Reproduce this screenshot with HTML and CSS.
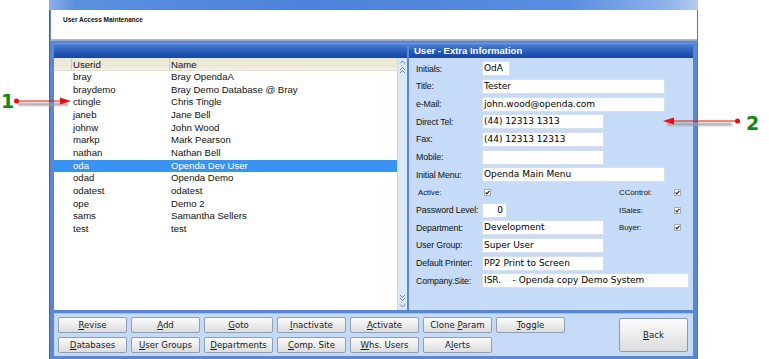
FILE: index.html
```html
<!DOCTYPE html>
<html>
<head>
<meta charset="utf-8">
<title>User Access Maintenance</title>
<link rel="stylesheet" href="styles.css">
</head>
<body>
<div class="window">
  <div class="titlebar"></div>
  <div class="header">User Access Maintenance</div>
  <div class="main">
    <section class="listpanel">
      <div class="phead"></div>
      <div class="listbody">
        <div class="list">
          <div class="lhead"><span class="c0"></span><span class="c1">Userid</span><span class="c2">Name</span></div>
          <div class="row"><span class="c0"></span><span class="c1">bray</span><span class="c2">Bray OpendaA</span></div>
          <div class="row"><span class="c0"></span><span class="c1">braydemo</span><span class="c2">Bray Demo Database @ Bray</span></div>
          <div class="row"><span class="c0"></span><span class="c1">ctingle</span><span class="c2">Chris Tingle</span></div>
          <div class="row"><span class="c0"></span><span class="c1">janeb</span><span class="c2">Jane Bell</span></div>
          <div class="row"><span class="c0"></span><span class="c1">johnw</span><span class="c2">John Wood</span></div>
          <div class="row"><span class="c0"></span><span class="c1">markp</span><span class="c2">Mark Pearson</span></div>
          <div class="row"><span class="c0"></span><span class="c1">nathan</span><span class="c2">Nathan Bell</span></div>
          <div class="row sel"><span class="c0"></span><span class="c1">oda</span><span class="c2">Openda Dev User</span></div>
          <div class="row"><span class="c0"></span><span class="c1">odad</span><span class="c2">Openda Demo</span></div>
          <div class="row"><span class="c0"></span><span class="c1">odatest</span><span class="c2">odatest</span></div>
          <div class="row"><span class="c0"></span><span class="c1">ope</span><span class="c2">Demo 2</span></div>
          <div class="row"><span class="c0"></span><span class="c1">sams</span><span class="c2">Samantha Sellers</span></div>
          <div class="row"><span class="c0"></span><span class="c1">test</span><span class="c2">test</span></div>
        </div>
        <div class="scroll">
          <div class="sbtop">
            <svg width="7" height="6" viewBox="0 0 7 6"><path d="M1 4.5L3.5 2L6 4.5" fill="none" stroke="#6a7f9c" stroke-width="1"/></svg>
            <svg width="7" height="8" viewBox="0 0 7 8"><path d="M1 4L3.5 1.5L6 4M1 7L3.5 4.5L6 7" fill="none" stroke="#6a7f9c" stroke-width="1"/></svg>
          </div>
          <div class="sbbot">
            <svg width="7" height="8" viewBox="0 0 7 8"><path d="M1 1L3.5 3.5L6 1M1 4L3.5 6.5L6 4" fill="none" stroke="#6a7f9c" stroke-width="1"/></svg>
            <svg width="7" height="6" viewBox="0 0 7 6"><path d="M1 1.5L3.5 4L6 1.5" fill="none" stroke="#6a7f9c" stroke-width="1"/></svg>
          </div>
        </div>
      </div>
    </section>
    <section class="infopanel">
      <div class="phead">User - Extra Information</div>
      <div class="form">
        <div class="frow"><span class="lbl">Initials:</span><span class="fld w-xs">OdA</span></div>
        <div class="frow"><span class="lbl">Title:</span><span class="fld w-l">Tester</span></div>
        <div class="frow"><span class="lbl">e-Mail:</span><span class="fld w-l">john.wood@openda.com</span></div>
        <div class="frow"><span class="lbl">Direct Tel:</span><span class="fld w-m">(44) 12313 1313</span></div>
        <div class="frow"><span class="lbl">Fax:</span><span class="fld w-m">(44) 12313 12313</span></div>
        <div class="frow"><span class="lbl">Mobile:</span><span class="fld w-m"></span></div>
        <div class="frow"><span class="lbl">Initial Menu:</span><span class="fld w-l">Openda Main Menu</span></div>
        <div class="frow"><span class="lbl small">Active:</span><span class="chkcell"><span class="chk"><svg width="5" height="5" viewBox="0 0 5 5"><path d="M0.6 2.4L1.9 3.9L4.4 0.8" fill="none" stroke="#222" stroke-width="1.1"/></svg></span></span><span class="lbl small">CControl:</span><span class="chk"><svg width="5" height="5" viewBox="0 0 5 5"><path d="M0.6 2.4L1.9 3.9L4.4 0.8" fill="none" stroke="#222" stroke-width="1.1"/></svg></span></div>
        <div class="frow"><span class="lbl">Password Level:</span><span class="fldcell"><span class="fld w-xxs num">0</span></span><span class="lbl small">ISales:</span><span class="chk"><svg width="5" height="5" viewBox="0 0 5 5"><path d="M0.6 2.4L1.9 3.9L4.4 0.8" fill="none" stroke="#222" stroke-width="1.1"/></svg></span></div>
        <div class="frow"><span class="lbl">Department:</span><span class="fldcell"><span class="fld w-m">Development</span></span><span class="lbl small">Buyer:</span><span class="chk"><svg width="5" height="5" viewBox="0 0 5 5"><path d="M0.6 2.4L1.9 3.9L4.4 0.8" fill="none" stroke="#222" stroke-width="1.1"/></svg></span></div>
        <div class="frow"><span class="lbl">User Group:</span><span class="fld w-m">Super User</span></div>
        <div class="frow"><span class="lbl">Default Printer:</span><span class="fld w-m">PP2 Print to Screen</span></div>
        <div class="frow"><span class="lbl">Company.Site:</span><span class="fld w-xl">ISR.&nbsp;&nbsp;&nbsp;&nbsp;- Openda copy Demo System</span></div>
      </div>
    </section>
  </div>
  <div class="buttons">
    <div class="btngrid">
      <button class="btn"><u>R</u>evise</button>
      <button class="btn"><u>A</u>dd</button>
      <button class="btn"><u>G</u>oto</button>
      <button class="btn"><u>I</u>nactivate</button>
      <button class="btn"><u>A</u>ctivate</button>
      <button class="btn">Clone <u>P</u>aram</button>
      <button class="btn"><u>T</u>oggle</button>
      <button class="btn"><u>D</u>atabases</button>
      <button class="btn"><u>U</u>ser Groups</button>
      <button class="btn"><u>D</u>epartments</button>
      <button class="btn"><u>C</u>omp. Site</button>
      <button class="btn"><u>W</u>hs. Users</button>
      <button class="btn">A<u>l</u>erts</button>
    </div>
    <button class="btn back"><u>B</u>ack</button>
  </div>
</div>

<div class="callout c-one">
  <span class="num">1</span>
  <svg class="arrow" width="60" height="12" viewBox="0 0 60 12">
    <defs><filter id="b1" x="-10%" y="-100%" width="120%" height="300%"><feGaussianBlur stdDeviation="1"/></filter></defs>
    <rect x="4" y="7" width="50" height="2.5" fill="#9a9a9a" filter="url(#b1)"/>
    <line x1="2" y1="5" x2="48" y2="5" stroke="#e41010" stroke-width="1"/>
    <circle cx="2.5" cy="5" r="2.5" fill="#e41010"/>
    <path d="M46 1.5L57 5L46 8.5Z" fill="#e41010"/>
  </svg>
</div>
<div class="callout c-two">
  <svg class="arrow" width="80" height="12" viewBox="0 0 80 12">
    <defs><filter id="b2" x="-10%" y="-100%" width="120%" height="300%"><feGaussianBlur stdDeviation="1"/></filter></defs>
    <rect x="5" y="7" width="65" height="2.5" fill="#9a9a9a" filter="url(#b2)"/>
    <line x1="10" y1="5" x2="75" y2="5" stroke="#e41010" stroke-width="1"/>
    <circle cx="75.5" cy="5" r="2.5" fill="#e41010"/>
    <path d="M1 5L12 1.5L12 8.5Z" fill="#e41010"/>
  </svg>
  <span class="num">2</span>
</div>
</body>
</html>
```
FILE: styles.css
```css
* { box-sizing: border-box; margin: 0; padding: 0; }
html, body { background: #fff; }
body {
  width: 769px;
  height: 359px;
  overflow: hidden;
  position: relative;
  padding-left: 49px;
  font-family: "Liberation Sans", Arial, sans-serif;
  color: #000;
}

.window {
  width: 649px;
  height: 359px;
  background: #5a86d4;
  border-left: 1px solid #3c65b6;
  border-right: 1px solid #4a77c8;
  display: flex;
  flex-direction: column;
}

.titlebar {
  height: 10px;
  margin: 0 -1px;
  background: linear-gradient(90deg, #8db0e6 0%, #5c8fdd 4%, #4c82da 40%, #5a8de0 80%, #8fb2ea 95%, #b3cbef 100%);
}

.header {
  height: 30px;
  background: #fff;
  margin: 0 0 0 1px;
  padding: 6px 0 0 12px;
  font-size: 6.5px;
  font-weight: bold;
  color: #111;
  border-bottom: 1px solid #a9b9d2;
}

.main {
  height: 270px;
  display: flex;
  gap: 2px;
  padding: 2px 4px 0 4px;
  background: #5a86d4;
  border-top: 1px solid #90a9d4;
}

.phead {
  height: 15px;
  background: linear-gradient(#5283d6 0%, #3466c2 35%, #2053b0 70%, #1a479f 100%);
  border-top: 1px solid #6f97dc;
  color: #fff;
  font-weight: bold;
  font-size: 9.5px;
  line-height: 13px;
  padding-left: 5px;
}

.listpanel {
  width: 353px;
  display: flex;
  flex-direction: column;
}
.listbody {
  flex: 1;
  display: flex;
  background: #fff;
}
.list {
  flex: 1;
  background: #fff;
  font-size: 9.6px;
}
.lhead {
  height: 13px;
  display: flex;
  background: linear-gradient(#ebe8d8 0%, #ebe8d8 70%, #f4f2ea 100%);
  border-bottom: 1px solid #e0ddcc;
  line-height: 13px;
  color: #111;
}
.lhead .c0, .lhead .c1 { border-right: 1px solid #cfccbc; }
.row {
  height: 12.67px;
  line-height: 12.67px;
  display: flex;
  color: #111;
}
.c0 { width: 18px; }
.c1 { width: 98px; padding-left: 1px; }
.c2 { flex: 1; padding-left: 1px; }
.row.sel { background: #3a93f3; color: #fff; }

.scroll {
  width: 10px;
  background: #dce7f6;
  border-left: 1px solid #cbd8ec;
  display: flex;
  flex-direction: column;
  justify-content: space-between;
  align-items: center;
  padding: 1px 0 1px 0;
}
.sbtop, .sbbot {
  display: flex;
  flex-direction: column;
  align-items: center;
  gap: 1px;
}
.sbtop svg, .sbbot svg { display: block; }

.infopanel {
  flex: 1;
  display: flex;
  flex-direction: column;
  background: #c6dbf7;
}
.form {
  padding: 2px 0 0 7px;
}
.frow {
  height: 17.67px;
  display: grid;
  grid-template-columns: 66px 135px 57px auto;
  align-items: center;
}
.lbl {
  font-size: 8.8px;
  letter-spacing: -0.15px;
  color: #111;
  white-space: nowrap;
}
.lbl.small { font-size: 7.8px; letter-spacing: 0; padding-left: 2px; }
.fld {
  display: block;
  height: 15px;
  background: #fff;
  border: 1px solid #d6dfec;
  border-radius: 1px;
  font-family: "DejaVu Sans", Verdana, sans-serif;
  font-size: 9px;
  line-height: 13px;
  padding-left: 1px;
  white-space: nowrap;
  overflow: hidden;
  color: #000;
}
.w-xxs { width: 25px; }
.w-xs { width: 28px; }
.w-m { width: 122px; }
.w-l { width: 183px; grid-column: 2 / 5; }
.w-xl { width: 207px; grid-column: 2 / 5; }
.fld.num { text-align: right; padding-right: 3px; }
.chkcell { display: flex; padding-left: 2px; }
.chk {
  display: flex;
  align-items: center;
  justify-content: center;
  width: 7px;
  height: 7px;
  background: #fff;
  border: 1px solid #a7adb8;
}
.chk svg { display: block; }

.buttons {
  height: 43px;
  margin: 3px 4px 0 4px;
  background: #c5daf6;
  border-top: 1px solid #a7bfe4;
  display: flex;
  align-items: flex-start;
  padding: 3px 5px 0 4px;
}
.btngrid {
  display: grid;
  grid-template-columns: repeat(7, 69px);
  grid-auto-rows: 16px;
  column-gap: 4px;
  row-gap: 4px;
}
.btn {
  height: 16px;
  border: 1px solid #8e9db8;
  border-radius: 2px;
  background: linear-gradient(#fbfbfb 0%, #eeeeee 45%, #dcdcdc 100%);
  font-family: "DejaVu Sans", Verdana, sans-serif;
  font-size: 8.6px;
  color: #1a1a1a;
  line-height: 13px;
  text-align: center;
  padding: 0;
  white-space: nowrap;
}
.btn u { text-decoration: underline; text-underline-offset: 1px; }
.btn.back {
  width: 69px;
  height: 34px;
  margin-left: auto;
  margin-top: 1px;
  border-color: #8a99b5;
}

.callout {
  position: absolute;
  display: flex;
  align-items: center;
}
.callout .num {
  font-family: "DejaVu Sans", Verdana, sans-serif;
  font-weight: bold;
  font-size: 19px;
  color: #118a11;
  line-height: 20px;
}
.callout svg { display: block; }
.c-one { left: 1px; top: 91px; }
.c-one .num { width: 13px; }
.c-one .arrow { margin-top: 1px; }
.c-two { left: 662px; top: 110px; }
.c-two .num { margin-left: 4px; margin-top: 3px; }
```
